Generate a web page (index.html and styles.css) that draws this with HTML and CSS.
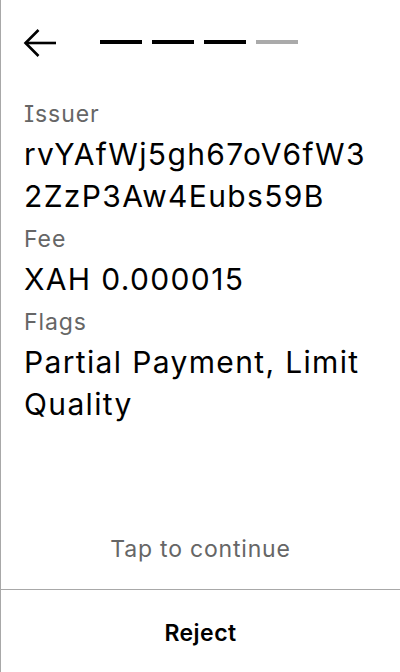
FILE: index.html
```html
<!DOCTYPE html>
<html>
<head>
<meta charset="utf-8">
<link rel="stylesheet" href="styles.css">
</head>
<body>
<div class="screen">
  <div class="header">
    <svg class="back" width="34" height="28" viewBox="0 0 34 28" fill="none" stroke="#000" stroke-width="2.6">
      <path d="M33 14 H2.5"/>
      <path d="M15.5 1 L2.5 14 L15.5 27"/>
    </svg>
    <div class="steps">
      <span class="step on"></span>
      <span class="step on"></span>
      <span class="step on"></span>
      <span class="step"></span>
    </div>
  </div>
  <div class="content">
    <div class="field">
      <div class="label">Issuer</div>
      <div class="value">rvYAfWj5gh67oV6fW32ZzP3Aw4Eubs59B</div>
    </div>
    <div class="field">
      <div class="label">Fee</div>
      <div class="value">XAH 0.000015</div>
    </div>
    <div class="field">
      <div class="label">Flags</div>
      <div class="value">Partial Payment, Limit Quality</div>
    </div>
  </div>
  <div class="tap">Tap to continue</div>
  <div class="footer">
    <button class="reject">Reject</button>
  </div>
</div>
</body>
</html>
```
FILE: styles.css
```css
html, body {
  margin: 0;
  padding: 0;
  background: #fff;
}
body {
  font-family: Inter, "Noto Sans", sans-serif;
  font-feature-settings: "cv08" 1;
  color: #000;
}
.screen {
  height: 672px;
  box-sizing: border-box;
  border-left: 1px solid #a8a8a8;
  display: flex;
  flex-direction: column;
}
.header {
  display: flex;
  align-items: center;
  height: 86px;
  flex: none;
  padding-left: 21px;
  gap: 43px;
}
.back {
  display: block;
  flex: none;
  margin-left: 1px;
}
.steps {
  display: flex;
  gap: 10px;
  margin-bottom: 2px;
}
.step {
  width: 42px;
  height: 4px;
  background: #aaa;
}
.step.on {
  background: #000;
}
.content {
  flex: 1;
  padding: 10px 23px 0;
  display: flex;
  flex-direction: column;
  gap: 4px;
}
.label {
  font-size: 23px;
  line-height: 37px;
  letter-spacing: 0.04em;
  color: #666;
}
.value {
  font-size: 30px;
  line-height: 42px;
  letter-spacing: 0.045em;
  word-break: break-all;
}
.tap {
  text-align: center;
  font-size: 23px;
  line-height: 28px;
  letter-spacing: 0.035em;
  color: #666;
  padding-bottom: 26px;
}
.footer {
  border-top: 1px solid #a8a8a8;
  height: 83px;
  box-sizing: border-box;
  padding-top: 3px;
  display: flex;
  align-items: center;
  justify-content: center;
}
.reject {
  border: none;
  background: none;
  font-family: inherit;
  font-feature-settings: inherit;
  font-size: 23px;
  font-weight: 600;
  letter-spacing: 0.02em;
  color: #000;
  padding: 0;
}
```
